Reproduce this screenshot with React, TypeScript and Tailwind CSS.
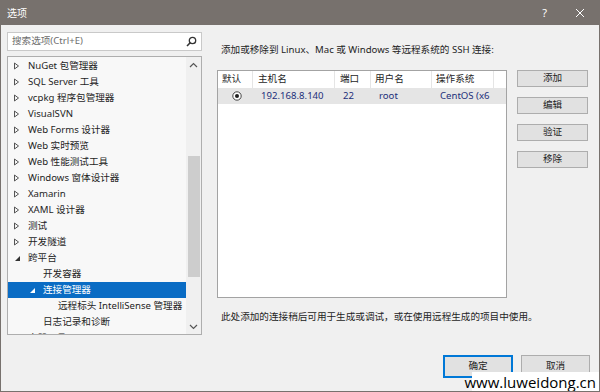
import React from "react";

const tree = [
  { label: "NuGet 包管理器", level: 0, state: "closed" },
  { label: "SQL Server 工具", level: 0, state: "closed" },
  { label: "vcpkg 程序包管理器", level: 0, state: "closed" },
  { label: "VisualSVN", level: 0, state: "closed" },
  { label: "Web Forms 设计器", level: 0, state: "closed" },
  { label: "Web 实时预览", level: 0, state: "closed" },
  { label: "Web 性能测试工具", level: 0, state: "closed" },
  { label: "Windows 窗体设计器", level: 0, state: "closed" },
  { label: "Xamarin", level: 0, state: "closed" },
  { label: "XAML 设计器", level: 0, state: "closed" },
  { label: "测试", level: 0, state: "closed" },
  { label: "开发隧道", level: 0, state: "closed" },
  { label: "跨平台", level: 0, state: "open" },
  { label: "开发容器", level: 1, state: "leaf" },
  { label: "连接管理器", level: 1, state: "open", selected: true },
  { label: "远程标头 IntelliSense 管理器", level: 2, state: "leaf" },
  { label: "日志记录和诊断", level: 1, state: "leaf" },
  { label: "容器工具", level: 0, state: "closed" },
];

const font = { fontFamily: '"Noto Sans", "Noto Sans CJK SC", sans-serif' };

function Arrow({ state, selected }: { state: string; selected?: boolean }) {
  if (state === "leaf") return <span className="w-[11px] shrink-0" />;
  if (state === "open")
    return (
      <svg width="11" height="8" viewBox="0 0 11 8" className="shrink-0">
        <path d="M2 7 L7 2 L7 7 Z" fill={selected ? "#ffffff" : "#333333"} />
      </svg>
    );
  return (
    <svg width="11" height="8" viewBox="0 0 11 8" className="shrink-0">
      <path d="M1.5 1 L5.5 4 L1.5 7 Z" fill="none" stroke="#555555" strokeWidth="1" />
    </svg>
  );
}

export default function App() {
  return (
    <div
      className="w-[600px] h-[392px] flex flex-col border border-[#77716d] bg-[#f0f0f0] text-[9.6px] text-[#1e1e1e] overflow-hidden relative"
      style={font}
    >
      {/* title bar */}
      <div className="h-[24px] shrink-0 bg-[#77716d] flex items-center pl-[6px] text-white text-[10px]">
        <span>选项</span>
        <span className="ml-auto mr-[28px] text-[11px]">?</span>
        <svg width="10" height="10" viewBox="0 0 10 10" className="mr-[14px]">
          <path d="M1 1 L9 9 M9 1 L1 9" stroke="#ffffff" strokeWidth="1" />
        </svg>
      </div>

      <div className="flex flex-1">
        {/* left column */}
        <div className="w-[201px] shrink-0 pl-[6px] pt-[7px] flex flex-col gap-[5px]">
          <div className="h-[19px] bg-white border border-[#c9c9c9] flex items-center pl-[4px] pr-[4px]">
            <span className="text-[#6d6d6d]">搜索选项(Ctrl+E)</span>
            <svg width="11" height="11" viewBox="0 0 11 11" className="ml-auto">
              <circle cx="6.5" cy="4.5" r="3.2" fill="none" stroke="#333" strokeWidth="1.3" />
              <path d="M4.2 6.8 L1 10" stroke="#333" strokeWidth="1.6" />
            </svg>
          </div>
          <div className="h-[279px] bg-[#f8f8f8] border border-[#aeaeae] flex overflow-hidden">
            <div className="flex-1 flex flex-col pt-[1px]">
              {tree.map((t) => (
                <div
                  key={t.label}
                  className={`h-[16px] shrink-0 flex items-center whitespace-nowrap ${t.selected ? "bg-[#0a6cc4] text-white" : ""}`}
                  style={{ paddingLeft: 5 + t.level * 15 }}
                >
                  <Arrow state={t.state} selected={t.selected} />
                  <span className="ml-[4px]">{t.label}</span>
                </div>
              ))}
            </div>
            <div className="w-[15px] shrink-0 bg-[#f0f0f0] flex flex-col items-center">
              <svg width="9" height="6" viewBox="0 0 9 6" className="mt-[5px]">
                <path d="M1 5 L4.5 1.5 L8 5" fill="none" stroke="#555" strokeWidth="1.2" />
              </svg>
              <div className="w-[12px] h-[121px] bg-[#cdcdcd] mt-[88px]" />
              <svg width="9" height="6" viewBox="0 0 9 6" className="mt-auto mb-[4px]">
                <path d="M1 1 L4.5 4.5 L8 1" fill="none" stroke="#555" strokeWidth="1.2" />
              </svg>
            </div>
          </div>
        </div>

        {/* right column */}
        <div className="flex-1 pl-[15px] pt-[17px] flex flex-col">
          <div className="h-[16px] flex items-center pl-[4px]">
            添加或移除到 Linux、Mac 或 Windows 等远程系统的 SSH 连接:
          </div>
          <div className="flex mt-[12px] gap-[10px]">
            <div className="w-[290px] h-[228px] bg-white border border-[#a3a3a3] flex flex-col">
              <div className="h-[17px] flex items-center">
                <div className="w-[35px] h-full flex items-center pl-[4px] border-r border-[#e5e5e5]">默认</div>
                <div className="w-[82px] h-full flex items-center pl-[5px] border-r border-[#e5e5e5]">主机名</div>
                <div className="w-[36px] h-full flex items-center pl-[5px] border-r border-[#e5e5e5]">端口</div>
                <div className="w-[61px] h-full flex items-center pl-[4px] border-r border-[#e5e5e5]">用户名</div>
                <div className="w-[62px] h-full flex items-center pl-[4px] border-r border-[#e5e5e5]">操作系统</div>
              </div>
              <div className="h-[16px] bg-[#e5e5e5] flex items-center text-[#1d2f7a] whitespace-nowrap">
                <div className="w-[35px] flex justify-center pl-[2px]">
                  <svg width="10" height="10" viewBox="0 0 10 10">
                    <circle cx="5" cy="5" r="4.2" fill="#fff" stroke="#333" strokeWidth="0.9" />
                    <circle cx="5" cy="5" r="2" fill="#1e1e1e" />
                  </svg>
                </div>
                <div className="w-[82px] pl-[8px]">192.168.8.140</div>
                <div className="w-[36px] pl-[8px]">22</div>
                <div className="w-[61px] pl-[8px]">root</div>
                <div className="w-[62px] pl-[8px]">CentOS (x6</div>
              </div>
            </div>
            <div className="w-[71px] flex flex-col gap-[10px]">
              {["添加", "编辑", "验证", "移除"].map((b) => (
                <div key={b} className="h-[17px] bg-[#e1e1e1] border border-[#adadad] flex items-center justify-center">
                  {b}
                </div>
              ))}
            </div>
          </div>
          <div className="h-[16px] mt-[11px] flex items-center pl-[4px]">
            此处添加的连接稍后可用于生成或调试，或在使用远程生成的项目中使用。
          </div>
          <div className="flex justify-end gap-[8px] mt-[30px] pr-[9px]">
            <div className="w-[70px] h-[23px] bg-[#e1e1e1] border-2 border-[#0078d7] flex items-center justify-center">确定</div>
            <div className="w-[69px] h-[23px] bg-[#e1e1e1] border border-[#adadad] flex items-center justify-center">取消</div>
          </div>
        </div>
      </div>

      {/* watermark */}
      <div
        className="absolute right-0 bottom-0 w-[127px] h-[19px] bg-white flex items-end justify-end pr-[3px] text-[15px] leading-[18px] text-black"
        style={{ fontFamily: '"Open Sans", sans-serif' }}
      >
        www.luweidong.cn
      </div>
    </div>
  );
}
